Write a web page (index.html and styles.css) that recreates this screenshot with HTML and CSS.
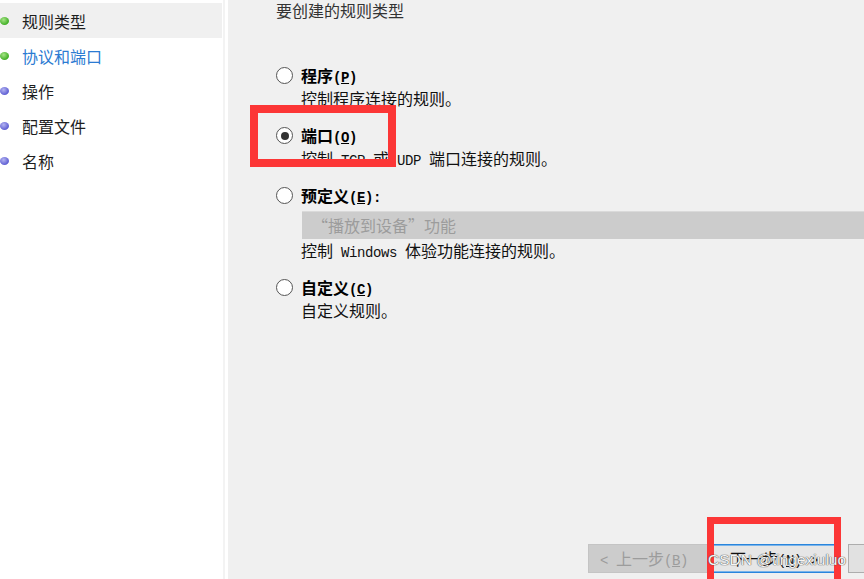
FILE: index.html
```html
<!DOCTYPE html>
<html lang="zh-CN">
<head>
<meta charset="utf-8">
<title>新建入站规则向导</title>
<link rel="stylesheet" href="styles.css">
</head>
<body>
<div class="app">
  <nav class="steps">
    <div class="step sel"><span class="dot green"></span>规则类型</div>
    <div class="step active"><span class="dot green"></span>协议和端口</div>
    <div class="step"><span class="dot purple"></span>操作</div>
    <div class="step"><span class="dot purple"></span>配置文件</div>
    <div class="step"><span class="dot purple"></span>名称</div>
  </nav>
  <main class="pane">
    <div class="title">要创建的规则类型</div>
    <div class="options">
      <div class="opt">
        <div class="opt-row"><span class="radio"></span><span class="label">程序<span class="m">(<u>P</u>)</span></span></div>
        <div class="desc">控制程序连接的规则。</div>
      </div>
      <div class="opt">
        <div class="opt-row"><span class="radio checked"></span><span class="label">端口<span class="m">(<u>O</u>)</span></span></div>
        <div class="desc">控制<span class="m"> TCP </span>或<span class="m"> UDP </span>端口连接的规则。</div>
      </div>
      <div class="opt">
        <div class="opt-row"><span class="radio"></span><span class="label">预定义<span class="m">(<u>E</u>):</span></span></div>
        <div class="combo">“播放到设备”功能</div>
        <div class="desc">控制<span class="m"> Windows </span>体验功能连接的规则。</div>
      </div>
      <div class="opt">
        <div class="opt-row"><span class="radio"></span><span class="label">自定义<span class="m">(<u>C</u>)</span></span></div>
        <div class="desc">自定义规则。</div>
      </div>
    </div>
    <div class="buttons">
      <div class="btn disabled"><span class="m">&lt; </span>上一步<span class="m">(<u>B</u>)</span></div>
      <div class="btn focus">下一步<span class="m">(<u>N</u>) &gt;</span></div>
      <div class="btn">取消</div>
    </div>
  </main>
  <div class="mark mark-port"></div>
  <div class="mark mark-next"></div>
  <div class="watermark">CSDN @tingexiuluo</div>
</div>
</body>
</html>
```
FILE: styles.css
```css
* { box-sizing: border-box; }
html, body { margin: 0; padding: 0; }
body {
  background: #ffffff;
  font-family: "Noto Sans CJK SC", "Noto Sans", sans-serif;
  font-size: 16px;
  color: #111;
  overflow: hidden;
}
.app {
  position: relative;
  display: flex;
  width: 864px;
  height: 579px;
  overflow: hidden;
}
.steps {
  width: 225px;
  flex: none;
  padding-top: 3px;
  border-right: 2px solid #f3f3f3;
  margin-right: 3px;
}
.step {
  display: flex;
  align-items: center;
  height: 35px;
  margin-right: 1px;
  color: #1e1e1e;
  line-height: 20px;
}
.step.sel { background: #f0f0f0; }
.step.active { color: #2b7bd2; }
.dot {
  width: 9px;
  height: 8px;
  border-radius: 50%;
  margin-right: 13px;
  flex: none;
}
.dot.green { background: radial-gradient(circle at 40% 35%, #a6e486, #3fae24 70%); }
.dot.purple { background: radial-gradient(circle at 40% 35%, #b4b4f2, #5d5dd2 70%); }

.pane {
  flex: 1;
  background: #f0f0f0;
  display: flex;
  flex-direction: column;
  padding-left: 48px;
  min-width: 0;
}
.title {
  height: 20px;
  line-height: 20px;
  color: #333;
}
.options {
  margin-top: 44px;
  display: flex;
  flex-direction: column;
  gap: 14px;
}
.opt-row {
  display: flex;
  align-items: center;
  height: 23px;
}
.radio {
  width: 17px;
  height: 17px;
  border-radius: 50%;
  border: 1.5px solid #555;
  background: #fff;
  margin-right: 8px;
  flex: none;
  display: flex;
  align-items: center;
  justify-content: center;
}
.radio.checked::after {
  content: "";
  width: 8px;
  height: 8px;
  border-radius: 50%;
  background: #333;
}
.label {
  font-weight: 700;
  color: #000;
  line-height: 23px;
}
.desc {
  margin-left: 25px;
  height: 23px;
  line-height: 23px;
  color: #111;
  white-space: nowrap;
}
.m {
  font-family: "Liberation Mono", monospace;
  font-size: 14px;
  letter-spacing: -0.4px;
  line-height: 1;
}
.combo {
  margin: 4px 0 0 26px;
  height: 28px;
  background: #cccccc;
  border-top: 1px solid #dadada;
  color: #9c9c9c;
  line-height: 26px;
  padding-left: 10px;
}
.buttons {
  margin-top: auto;
  margin-bottom: 6px;
  margin-left: 312px;
  display: flex;
  gap: 2px;
}
.btn {
  flex: none;
  width: 122px;
  height: 29px;
  line-height: 27px;
  border: 1px solid #adadad;
  background: #e1e1e1;
  color: #111;
  text-align: center;
  white-space: nowrap;
}
.btn.disabled {
  background: #cccccc;
  border-color: #c4c4c4;
  color: #9c9c9c;
  text-align: left;
  padding-left: 11px;
}
.btn.focus {
  width: 124px;
  background: #e6e6e6;
  border-color: #2a85dc;
  box-shadow: inset 0 0 0 1px #7ab4ea;
  margin-right: 10px;
}
.mark {
  position: absolute;
  border: 8px solid #fc3636;
}
.mark-port {
  left: 250px;
  top: 105px;
  width: 146px;
  height: 62px;
}
.mark-next {
  left: 707px;
  top: 517px;
  width: 134px;
  height: 90px;
  border-width: 7px;
}
.watermark {
  position: absolute;
  left: 708px;
  top: 550px;
  font-family: "Liberation Sans", Arial, sans-serif;
  font-size: 15.5px;
  line-height: 20px;
  color: #f6f6f6;
  text-shadow: 0 0 1px #444, 0 0 1px #444;
  white-space: nowrap;
}
```
